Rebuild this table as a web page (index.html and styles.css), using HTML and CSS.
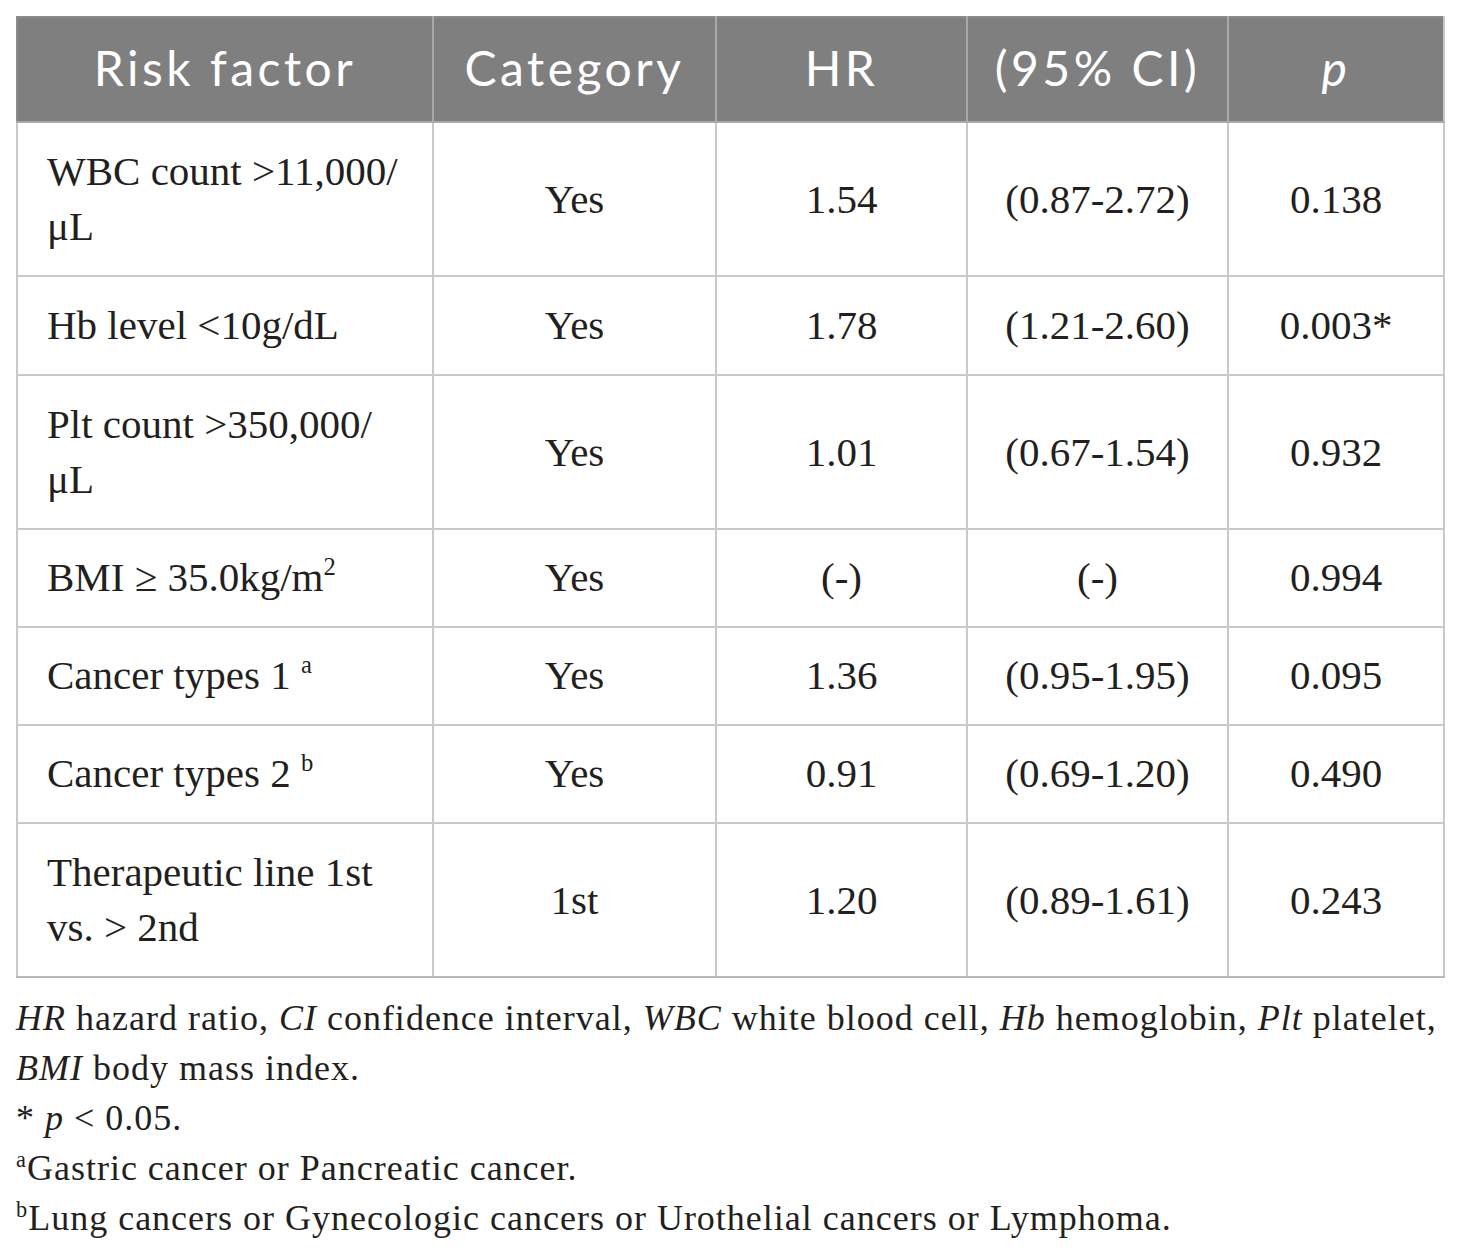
FILE: index.html
```html
<!DOCTYPE html>
<html>
<head>
<meta charset="utf-8">
<link rel="stylesheet" href="styles.css">
</head>
<body>
<div class="page">
  <table class="data">
    <colgroup>
      <col class="c1"><col class="c2"><col class="c3"><col class="c4"><col class="c5">
    </colgroup>
    <thead>
      <tr>
        <th>Risk factor</th>
        <th>Category</th>
        <th>HR</th>
        <th>(95% CI)</th>
        <th><i>p</i></th>
      </tr>
    </thead>
    <tbody>
      <tr>
        <td class="lbl">WBC count &gt;11,000/<br>μL</td>
        <td>Yes</td><td>1.54</td><td>(0.87-2.72)</td><td>0.138</td>
      </tr>
      <tr>
        <td class="lbl">Hb level &lt;10g/dL</td>
        <td>Yes</td><td>1.78</td><td>(1.21-2.60)</td><td>0.003*</td>
      </tr>
      <tr>
        <td class="lbl">Plt count &gt;350,000/<br>μL</td>
        <td>Yes</td><td>1.01</td><td>(0.67-1.54)</td><td>0.932</td>
      </tr>
      <tr class="short">
        <td class="lbl">BMI ≥ 35.0kg/m<sup>2</sup></td>
        <td>Yes</td><td>(-)</td><td>(-)</td><td>0.994</td>
      </tr>
      <tr class="short">
        <td class="lbl">Cancer types 1 <sup>a</sup></td>
        <td>Yes</td><td>1.36</td><td>(0.95-1.95)</td><td>0.095</td>
      </tr>
      <tr class="short">
        <td class="lbl">Cancer types 2 <sup>b</sup></td>
        <td>Yes</td><td>0.91</td><td>(0.69-1.20)</td><td>0.490</td>
      </tr>
      <tr>
        <td class="lbl">Therapeutic line 1st<br>vs. &gt; 2nd</td>
        <td>1st</td><td>1.20</td><td>(0.89-1.61)</td><td>0.243</td>
      </tr>
    </tbody>
  </table>
  <div class="notes">
    <p><i>HR</i> hazard ratio, <i>CI</i> confidence interval, <i>WBC</i> white blood cell, <i>Hb</i> hemoglobin, <i>Plt</i> platelet,<br><i>BMI</i> body mass index.</p>
    <p>* <i>p</i> &lt; 0.05.</p>
    <p><sup>a</sup>Gastric cancer or Pancreatic cancer.</p>
    <p><sup>b</sup>Lung cancers or Gynecologic cancers or Urothelial cancers or Lymphoma.</p>
  </div>
</div>
</body>
</html>
```

FILE: styles.css
```css
html, body {
  margin: 0;
  padding: 0;
  background: #ffffff;
}

.page {
  padding: 16px 0 0 16px;
  width: 1427px;
}

.data {
  width: 1427px;
  table-layout: fixed;
  border-collapse: collapse;
  font-family: "Liberation Serif", "Times New Roman", serif;
  color: #231f20;
}

.c1 { width: 416px; }
.c2 { width: 283px; }
.c3 { width: 251px; }
.c4 { width: 261px; }
.c5 { width: 216px; }

.data th {
  background: #7f7f7f;
  color: #ffffff;
  font-family: Lato, "Open Sans", sans-serif;
  font-weight: 400;
  font-size: 48px;
  letter-spacing: 3.5px;
  height: 99px;
  padding: 0 0 4px 0;
  text-align: center;
  vertical-align: middle;
  border: 2px solid #a9a9a9;
  border-top-color: #8a8a8a;
}

.data th:first-child { border-left-color: #8a8a8a; }
.data th:last-child { border-right-color: #c8c8c8; }

.data td {
  font-size: 41px;
  line-height: 55px;
  padding: 21px 10px;
  text-align: center;
  vertical-align: middle;
  border: 2px solid #c9c9c9;
}

.data tr.short td {
  padding-top: 20px;
  padding-bottom: 21px;
}

.data td.lbl {
  text-align: left;
  padding-left: 29px;
}

.data tr:last-child td {
  border-bottom-color: #b8b8b8;
}

.data sup {
  font-size: 0.6em;
  line-height: 0;
  vertical-align: 0.65em;
}

.notes {
  margin-top: 15px;
  font-family: "Liberation Serif", "Times New Roman", serif;
  font-size: 36px;
  letter-spacing: 1px;
  line-height: 50px;
  color: #231f20;
}

.notes p {
  margin: 0;
  white-space: nowrap;
}

.notes sup {
  font-size: 0.62em;
  line-height: 0;
  vertical-align: 0.6em;
}
```
